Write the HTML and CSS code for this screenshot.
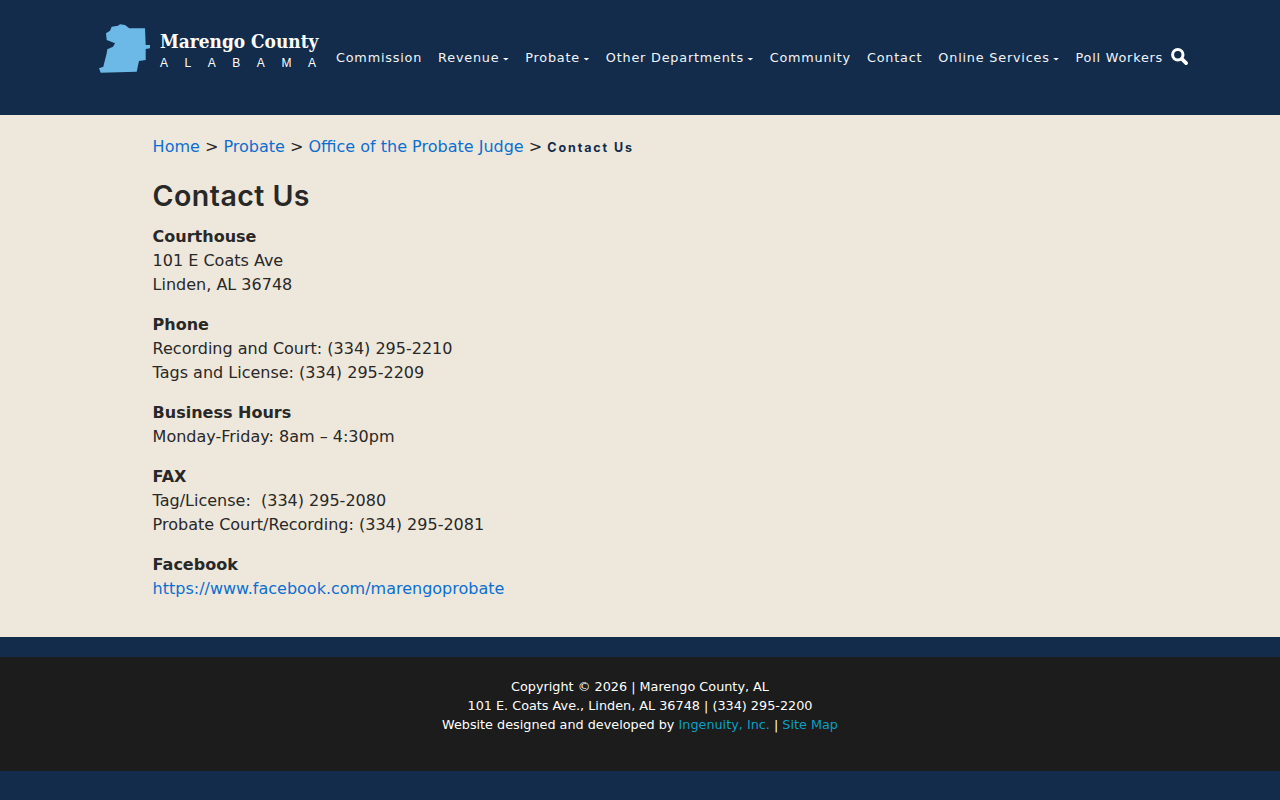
FILE: index.html
```
<!DOCTYPE html>
<html lang="en">
<head>
<meta charset="utf-8">
<title>Contact Us | Marengo County, AL</title>
<link rel="stylesheet" href="styles.css">
</head>
<body>
<header class="site-header">
  <a class="logo" href="#">
    <svg class="logo-map" viewBox="0 0 52 52" width="52" height="52" aria-hidden="true">
      <path fill="#6cb8e6" d="M21 1.3 L26 2 L30.3 5.3 L46 5.3 L46.7 22 L51 22 L51 25.3 L46.7 26 L46.7 37 L40 38 L37.7 48.7 L1.7 49.7 L0 45.3 L4.3 43.7 L7.7 30.3 L8.3 26.3 L14 23.7 L16 20.3 L7.7 17 L7 10.3 L11 7.7 L12.7 3.7 L19 2.7 Z"/>
    </svg>
    <span class="logo-text">
      <span class="logo-name">Marengo County</span>
      <span class="logo-state"><span>A</span><span>L</span><span>A</span><span>B</span><span>A</span><span>M</span><span>A</span></span>
    </span>
  </a>
  <nav class="main-nav">
    <a href="#">Commission</a>
    <a href="#" class="has-menu">Revenue</a>
    <a href="#" class="has-menu">Probate</a>
    <a href="#" class="has-menu">Other Departments</a>
    <a href="#">Community</a>
    <a href="#">Contact</a>
    <a href="#" class="has-menu">Online Services</a>
    <a href="#">Poll Workers</a>
    <a href="#" class="search" aria-label="Search">
      <svg viewBox="0 0 18 18" width="17" height="17" aria-hidden="true">
        <circle cx="7.2" cy="7.2" r="5.5" fill="none" stroke="#fff" stroke-width="3.2"/>
        <path d="M11.5 11.5 L16 16" stroke="#fff" stroke-width="3.8" stroke-linecap="round"/>
      </svg>
    </a>
  </nav>
</header>
<main class="content">
  <div class="breadcrumb"><a href="#">Home</a> &gt; <a href="#">Probate</a> &gt; <a href="#">Office of the Probate Judge</a> &gt; <span class="current">Contact Us</span></div>
  <h1>Contact Us</h1>
  <p><strong>Courthouse</strong><br>101 E Coats Ave<br>Linden, AL 36748</p>
  <p><strong>Phone</strong><br>Recording and Court: (334) 295-2210<br>Tags and License: (334) 295-2209</p>
  <p><strong>Business Hours</strong><br>Monday-Friday: 8am – 4:30pm</p>
  <p><strong>FAX</strong><br>Tag/License:&nbsp; (334) 295-2080<br>Probate Court/Recording: (334) 295-2081</p>
  <p><strong>Facebook</strong><br><a href="#">https://www.facebook.com/marengoprobate</a></p>
</main>
<footer class="site-footer">
  <div class="footer-inner">
    Copyright © 2026 | Marengo County, AL<br>
    101 E. Coats Ave., Linden, AL 36748 | (334) 295-2200<br>
    Website designed and developed by <a href="#">Ingenuity, Inc.</a> | <a href="#">Site Map</a>
  </div>
</footer>
</body>
</html>
```
FILE: styles.css
```
html, body {
  margin: 0;
  padding: 0;
}
body {
  min-height: 800px;
  background: #132c4b;
  color: #282828;
  font-family: "DejaVu Sans", sans-serif;
  font-size: 16px;
  line-height: 24px;
}
a {
  text-decoration: none;
}
.site-header {
  height: 115px;
  box-sizing: border-box;
  padding: 23px 0 0 99px;
  display: flex;
  align-items: flex-start;
  background: #132c4b;
}
.logo {
  display: flex;
  align-items: flex-start;
  width: 221px;
  height: 52px;
  color: #fff;
}
.logo-map {
  flex: none;
  display: block;
}
.logo-text {
  display: flex;
  flex-direction: column;
  margin-left: 9px;
  width: 160px;
}
.logo-name {
  font-family: "DejaVu Serif Condensed", "DejaVu Serif", serif;
  font-stretch: condensed;
  font-weight: 700;
  font-size: 18.9px;
  line-height: 24px;
  margin-top: 6px;
  white-space: nowrap;
}
.logo-state {
  display: flex;
  justify-content: space-between;
  font-family: "Liberation Sans", sans-serif;
  font-size: 12px;
  line-height: 14px;
  margin-top: 3px;
  padding-right: 4px;
}
.main-nav {
  display: flex;
  align-items: center;
  height: 24px;
  margin-top: 23px;
  margin-left: 16px;
  gap: 16px;
  font-size: 12.8px;
  letter-spacing: 0.8px;
  white-space: nowrap;
}
.main-nav a {
  color: #f2f4f7;
  display: flex;
  align-items: center;
}
.has-menu::after {
  content: "";
  width: 6.8px;
  height: 3px;
  margin-left: 3px;
  margin-top: 2px;
  background: #f2f4f7;
  clip-path: polygon(0 0, 100% 0, 50% 100%);
}
.main-nav .search {
  margin-left: -8px;
  margin-bottom: 3px;
}
.content {
  background: #eee7db;
  padding: 20px 152.6px 25px;
  height: 522px;
  box-sizing: border-box;
}
.content a {
  color: #0b6fd1;
}
.breadcrumb {
  font-size: 16px;
  line-height: 24px;
}
.current {
  font-family: "Inter", sans-serif;
  font-size: 12.5px;
  font-weight: 700;
  letter-spacing: 1.9px;
  color: #132c4b;
}
h1 {
  font-family: "Inter", sans-serif;
  font-size: 28.5px;
  font-weight: 600;
  letter-spacing: 0.45px;
  line-height: 34px;
  margin: 19px 0 12px;
  color: #282828;
}
p {
  margin: 0 0 16px;
}
.site-footer {
  margin-top: 20px;
  height: 114px;
  box-sizing: border-box;
  background: #1b1c1b;
  color: #fff;
  text-align: center;
  font-size: 12.8px;
  line-height: 19px;
  padding-top: 20px;
}
.site-footer a {
  color: #0d9fc4;
}
```
